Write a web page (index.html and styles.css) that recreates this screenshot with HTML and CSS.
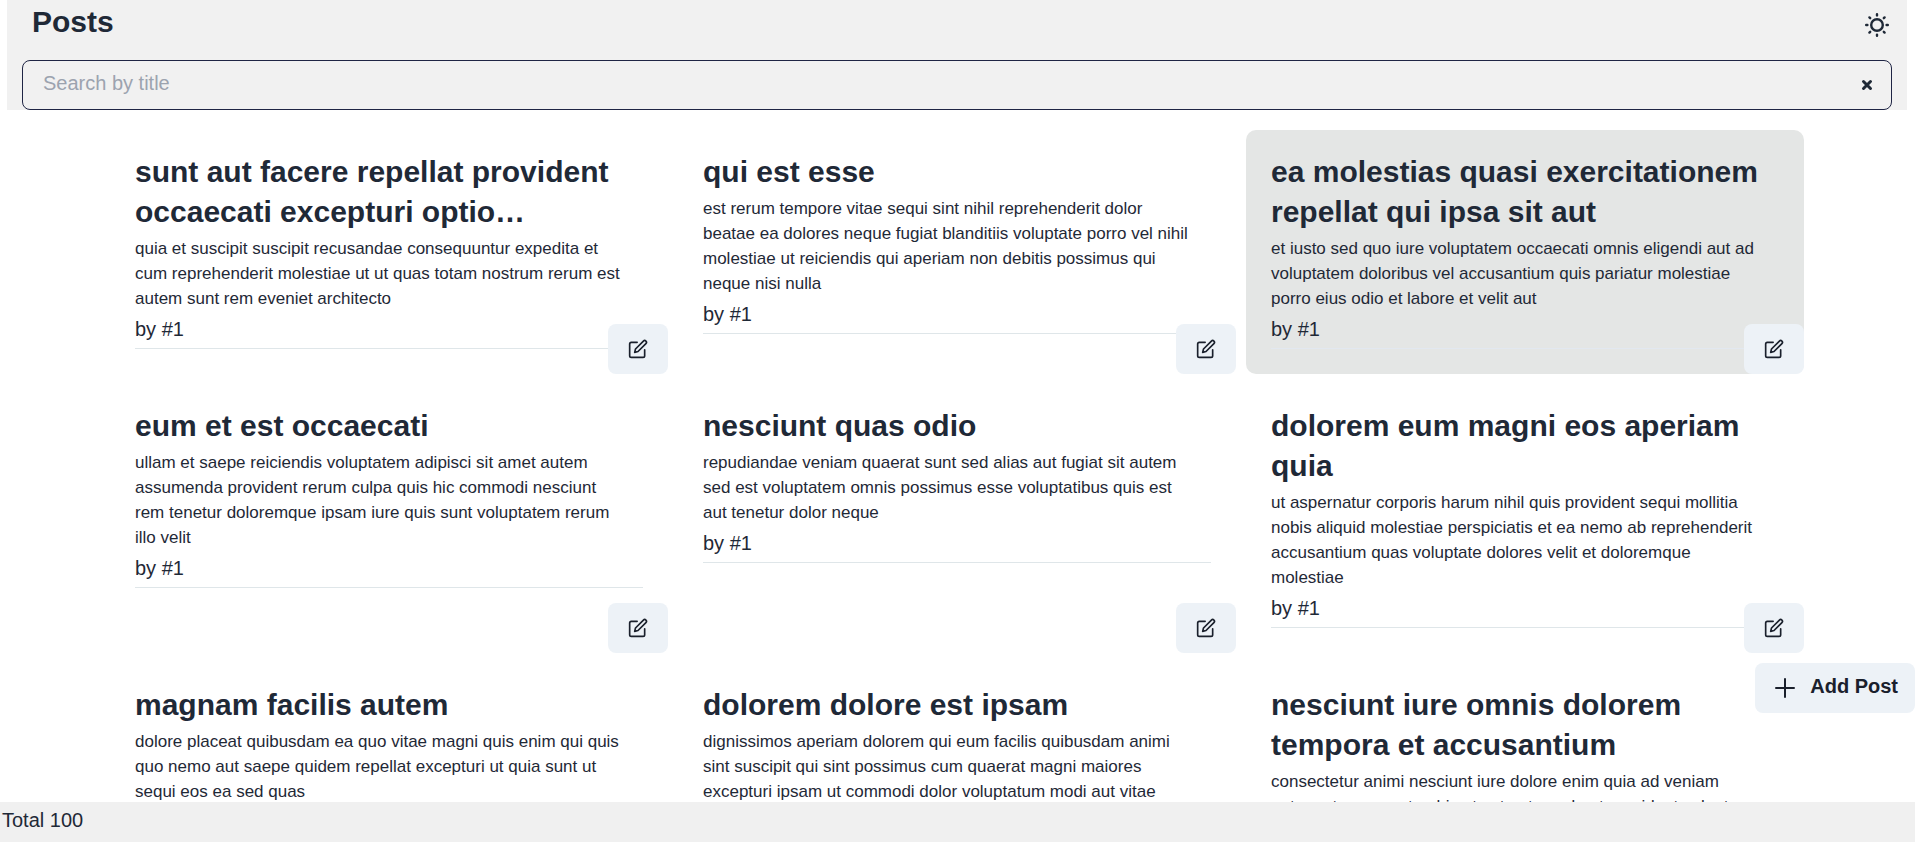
FILE: index.html
```html
<!DOCTYPE html>
<html lang="en">
<head>
<meta charset="utf-8">
<title>Posts</title>
<link rel="stylesheet" href="styles.css">
</head>
<body>
<svg class="sprite" aria-hidden="true">
  <symbol id="edit" viewBox="0 0 24 24" fill="none" stroke="currentColor" stroke-width="2" stroke-linecap="round" stroke-linejoin="round">
    <path d="M11 4H4a2 2 0 0 0-2 2v14a2 2 0 0 0 2 2h14a2 2 0 0 0 2-2v-7"/>
    <path d="M18.5 2.5a2.121 2.121 0 0 1 3 3L12 15l-4 1 1-4 9.500-9.500z"/>
  </symbol>
</svg>
<header class="header">
  <div class="header-bar">
    <h1 class="title">Posts</h1>
    <button class="icon-button" type="button" aria-label="Toggle theme">
      <svg class="sun" viewBox="0 0 24 24" fill="none" stroke="currentColor" stroke-width="2.400" stroke-linecap="round">
        <circle cx="12" cy="12" r="5.800"/>
        <path d="M12 1.200v1.200M12 21.600v1.200M1.200 12h1.200M21.600 12h1.200M4.400 4.400l.8.8M18.800 18.800l.8.8M4.400 19.600l.8-.8M18.800 5.200l.8-.8"/>
      </svg>
    </button>
  </div>
  <div class="search">
    <input class="search-input" type="text" placeholder="Search by title" aria-label="Search by title">
    <button class="icon-button" type="button" aria-label="Clear search">
      <svg class="clear" viewBox="0 0 12 12" fill="none" stroke="currentColor" stroke-width="3" stroke-linecap="round"><path d="M2.500 2.500l7 7M9.500 2.500l-7 7"/></svg>
    </button>
  </div>
</header>
<main class="posts">
  <article class="card"><div class="card-content"><h2 class="card-title">sunt aut facere repellat provident occaecati excepturi optio…</h2><p class="card-body">quia et suscipit suscipit recusandae consequuntur expedita et cum reprehenderit molestiae ut ut quas totam nostrum rerum est autem sunt rem eveniet architecto</p><p class="card-author">by #1</p></div><button class="edit" type="button" aria-label="Edit post"><svg class="edit-icon"><use href="#edit"/></svg></button></article>
  <article class="card"><div class="card-content"><h2 class="card-title">qui est esse</h2><p class="card-body">est rerum tempore vitae sequi sint nihil reprehenderit dolor beatae ea dolores neque fugiat blanditiis voluptate porro vel nihil molestiae ut reiciendis qui aperiam non debitis possimus qui neque nisi nulla</p><p class="card-author">by #1</p></div><button class="edit" type="button" aria-label="Edit post"><svg class="edit-icon"><use href="#edit"/></svg></button></article>
  <article class="card card-active"><div class="card-content"><h2 class="card-title">ea molestias quasi exercitationem repellat qui ipsa sit aut</h2><p class="card-body">et iusto sed quo iure voluptatem occaecati omnis eligendi aut ad voluptatem doloribus vel accusantium quis pariatur molestiae porro eius odio et labore et velit aut</p><p class="card-author">by #1</p></div><button class="edit" type="button" aria-label="Edit post"><svg class="edit-icon"><use href="#edit"/></svg></button></article>
  <article class="card"><div class="card-content"><h2 class="card-title">eum et est occaecati</h2><p class="card-body">ullam et saepe reiciendis voluptatem adipisci sit amet autem assumenda provident rerum culpa quis hic commodi nesciunt rem tenetur doloremque ipsam iure quis sunt voluptatem rerum illo velit</p><p class="card-author">by #1</p></div><button class="edit" type="button" aria-label="Edit post"><svg class="edit-icon"><use href="#edit"/></svg></button></article>
  <article class="card"><div class="card-content"><h2 class="card-title">nesciunt quas odio</h2><p class="card-body">repudiandae veniam quaerat sunt sed alias aut fugiat sit autem sed est voluptatem omnis possimus esse voluptatibus quis est aut tenetur dolor neque</p><p class="card-author">by #1</p></div><button class="edit" type="button" aria-label="Edit post"><svg class="edit-icon"><use href="#edit"/></svg></button></article>
  <article class="card"><div class="card-content"><h2 class="card-title">dolorem eum magni eos aperiam quia</h2><p class="card-body">ut aspernatur corporis harum nihil quis provident sequi mollitia nobis aliquid molestiae perspiciatis et ea nemo ab reprehenderit accusantium quas voluptate dolores velit et doloremque molestiae</p><p class="card-author">by #1</p></div><button class="edit" type="button" aria-label="Edit post"><svg class="edit-icon"><use href="#edit"/></svg></button></article>
  <article class="card"><div class="card-content"><h2 class="card-title">magnam facilis autem</h2><p class="card-body">dolore placeat quibusdam ea quo vitae magni quis enim qui quis quo nemo aut saepe quidem repellat excepturi ut quia sunt ut sequi eos ea sed quas</p></div></article>
  <article class="card"><div class="card-content"><h2 class="card-title">dolorem dolore est ipsam</h2><p class="card-body">dignissimos aperiam dolorem qui eum facilis quibusdam animi sint suscipit qui sint possimus cum quaerat magni maiores excepturi ipsam ut commodi dolor voluptatum modi aut vitae</p></div></article>
  <article class="card"><div class="card-content"><h2 class="card-title">nesciunt iure omnis dolorem tempora et accusantium</h2><p class="card-body">consectetur animi nesciunt iure dolore enim quia ad veniam autem ut quam aut nobis et est aut quod aut provident voluptas</p></div></article>
</main>
<button class="add" type="button">
  <svg class="plus" viewBox="0 0 20 20" fill="none" stroke="currentColor" stroke-width="2" stroke-linecap="round"><path d="M10 1v18M1 10h18"/></svg>
  <span class="add-label">Add Post</span>
</button>
<footer class="footer">Total 100</footer>
</body>
</html>
```
FILE: styles.css
```css
* { box-sizing: border-box; }
body {
  margin: 0;
  height: 100vh;
  display: flex;
  flex-direction: column;
  overflow: hidden;
  background: #fff;
  color: #1f2937;
  font: 20px/30px "Liberation Sans", Arial, sans-serif;
}
h1, h2, p { margin: 0; }
button { font: inherit; color: #1a202c; border: 0; padding: 0; cursor: pointer; }
svg { display: block; }
.sprite { position: absolute; width: 0; height: 0; }
.header {
  flex: none;
  margin: 0 8px 0 7px;
  padding: 0 15px;
  background: #f1f1f1;
}
.header-bar {
  display: flex;
  justify-content: space-between;
  height: 60px;
  padding: 1px 3px 11px 10px;
}
.title { padding-top: 1px; font-size: 30px; line-height: 40px; }
.icon-button { display: flex; align-items: center; background: none; color: #1f2937; }
.sun { width: 24px; height: 24px; }
.search {
  display: flex;
  align-items: center;
  height: 50px;
  padding: 0 18px 0 20px;
  border: 1px solid #1f2544;
  border-radius: 8px;
}
.search-input {
  flex: 1;
  min-width: 0;
  height: 46px;
  padding: 0 0 4px;
  border: 0;
  outline: 0;
  background: none;
  color: inherit;
  font: inherit;
}
.search-input::placeholder { color: #9ca3af; opacity: 1; }
.clear { width: 12px; height: 12px; }
.posts {
  flex: 1;
  min-height: 0;
  overflow: hidden;
  display: grid;
  grid-template-columns: repeat(3, minmax(0, 1fr));
  align-content: start;
  gap: 10px;
  padding: 20px 111px 0 110px;
}
.card { position: relative; padding: 22px 25px 25px; border-radius: 10px; }
.card-active { background: #e4e6e5; }
.card-content { border-bottom: 1px solid #dfe6e9; padding-bottom: 4px; }
.card-title { font-size: 30px; line-height: 40px; }
.card-body { margin: 4px 0 3px; padding-right: 18px; font-size: 17px; line-height: 25px; }
.card-active .card-content { border-color: #e2e8f0; }
.edit {
  position: absolute;
  right: 0;
  bottom: 0;
  display: flex;
  align-items: center;
  justify-content: center;
  width: 60px;
  height: 50px;
  border-radius: 8px;
  background: #edf2f7;
}
.edit-icon { width: 20px; height: 20px; }
.add {
  position: fixed;
  right: 0;
  bottom: 129px;
  display: flex;
  align-items: center;
  gap: 15px;
  height: 50px;
  padding: 0 17px 0 20px;
  border-radius: 8px;
  background: #edf2f7;
  font-weight: bold;
}
.plus { width: 20px; height: 20px; }
.add-label { padding-bottom: 4px; }
.footer { flex: none; height: 40px; padding: 3px 2px; background: #f0f0f0; }
```
